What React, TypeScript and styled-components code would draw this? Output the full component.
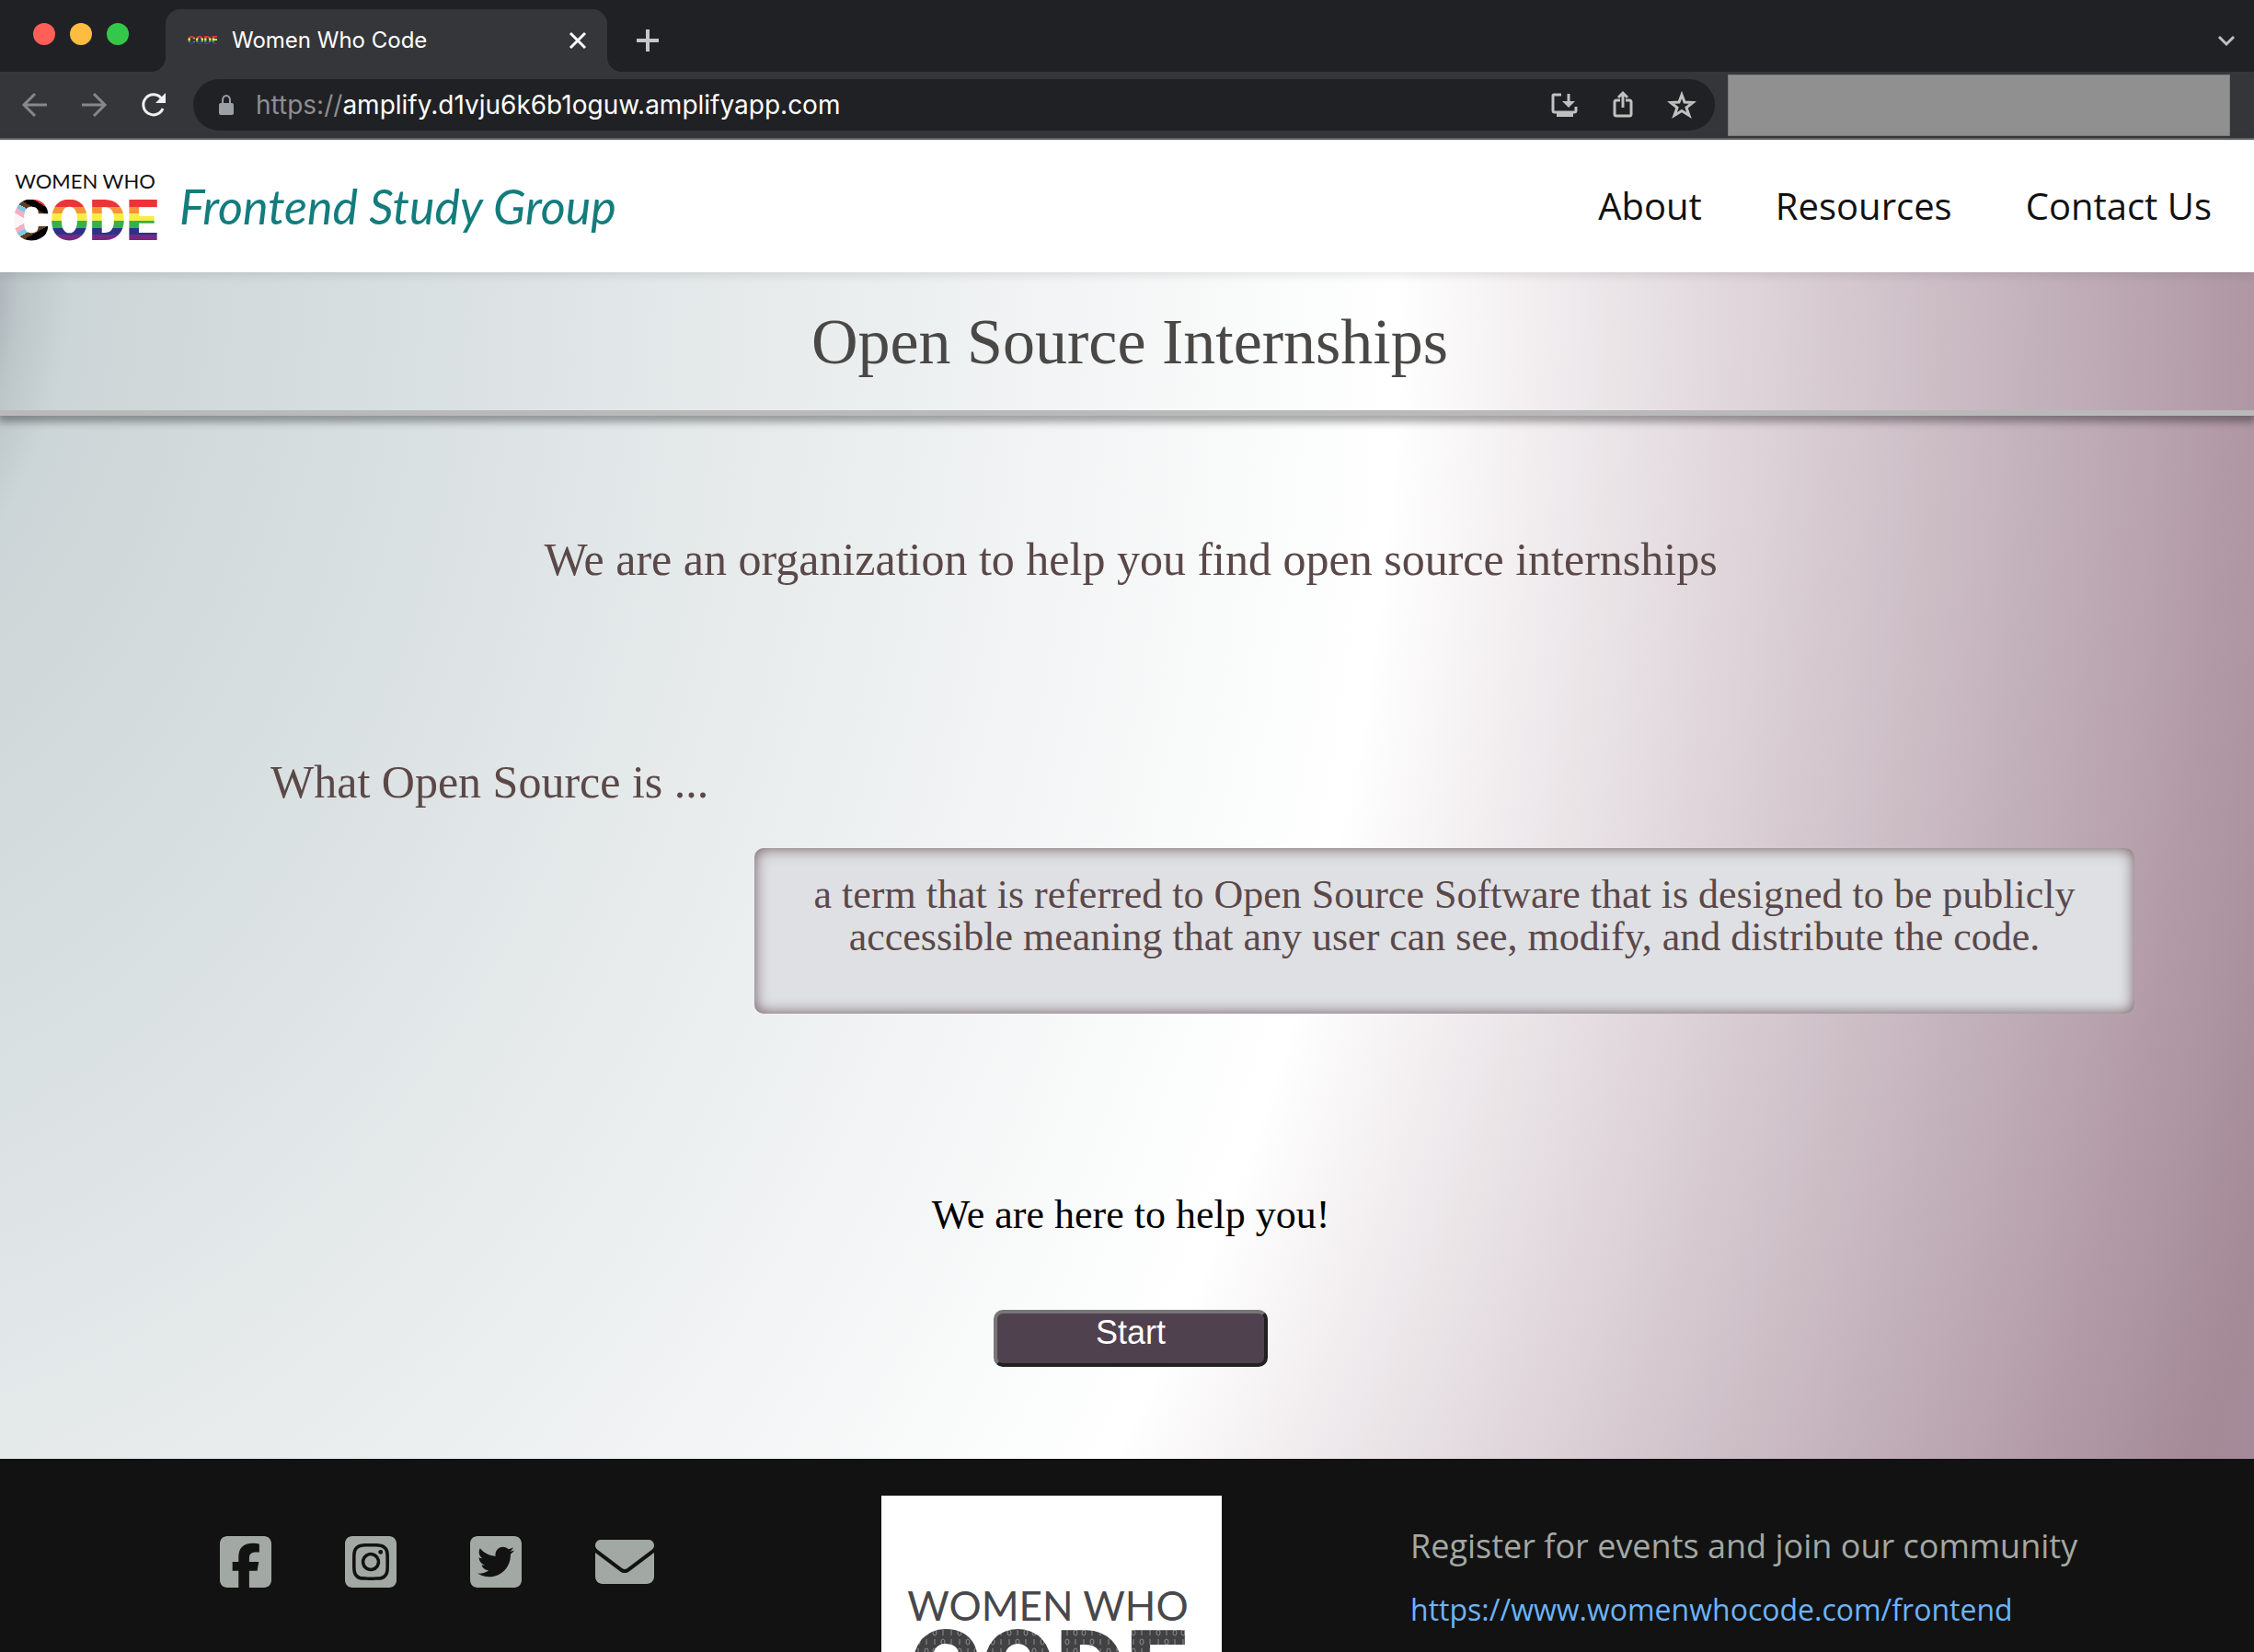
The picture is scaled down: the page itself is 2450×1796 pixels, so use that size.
import React from "react";
import styled, { createGlobalStyle } from "styled-components";
import {
  FaSquareFacebook,
  FaSquareInstagram,
  FaSquareTwitter,
  FaEnvelope,
} from "react-icons/fa6";

const RAINBOW =
  "linear-gradient(#ec3338 0 17%, #f7933c 17% 33%, #f8ec46 33% 50%, #35b04e 50% 67%, #2b3388 67% 83%, #732a82 83%)";

const GlobalStyle = createGlobalStyle`
  *, *::before, *::after { box-sizing: border-box; }
  body { margin: 0; background: #121212; }
  h1, h2, p { margin: 0; font-weight: 400; }
  a { text-decoration: none; }
  button { cursor: pointer; }
`;

const Window = styled.div`
  display: flex;
  flex-direction: column;
  height: 100vh;
  overflow: hidden;
`;

/* ---------- browser frame ---------- */

const TabStrip = styled.div`
  flex: none;
  display: flex;
  align-items: flex-end;
  height: 78px;
  padding-right: 14px;
  background: #202124;
`;

const Lights = styled.div`
  display: flex;
  gap: 16px;
  align-self: flex-start;
  padding: 25px 40px 0 36px;
`;

const Light = styled.span<{ $color: string }>`
  width: 24px;
  height: 24px;
  border-radius: 50%;
  background: ${(p) => p.$color};
`;

const Tab = styled.div`
  position: relative;
  display: flex;
  align-items: center;
  gap: 16px;
  width: 480px;
  height: 68px;
  padding: 0 20px 0 24px;
  border-radius: 16px 16px 0 0;
  background: #35363a;
  &::before,
  &::after {
    content: "";
    position: absolute;
    bottom: 0;
    width: 16px;
    height: 16px;
  }
  &::before {
    left: -16px;
    background: radial-gradient(circle at 0 0, #202124 16px, #35363a 16px);
  }
  &::after {
    right: -16px;
    background: radial-gradient(circle at 100% 0, #202124 16px, #35363a 16px);
  }
`;

const Favicon = styled.span`
  width: 32px;
  font: 900 13px/10px Roboto, sans-serif;
  text-align: center;
  color: transparent;
  background: ${RAINBOW};
  background-clip: text;
  -webkit-background-clip: text;
`;

const TabTitle = styled.span`
  flex: 1;
  font: 400 24px/32px Inter, sans-serif;
  color: #fff;
`;

const IconButton = styled.button<{ $size: number }>`
  display: flex;
  align-items: center;
  justify-content: center;
  flex: none;
  width: ${(p) => p.$size}px;
  height: ${(p) => p.$size}px;
  padding: 0;
  border: 0;
  background: none;
`;

const StripActions = styled.div`
  flex: 1;
  display: flex;
  align-items: center;
  justify-content: space-between;
  height: 68px;
  padding-left: 28px;
`;

const Toolbar = styled.div`
  flex: none;
  display: flex;
  align-items: center;
  height: 74px;
  padding: 0 26px 0 22px;
  border-bottom: 2px solid #69656a;
  background: #35363a;
`;

const NavButtons = styled.div`
  display: flex;
  gap: 32px;
  padding-right: 28px;
`;

const AddressBar = styled.form`
  flex: 1;
  display: flex;
  align-items: center;
  height: 56px;
  padding: 0 20px 0 24px;
  border-radius: 28px;
  background: #202124;
  font: 400 28px/36px Inter, sans-serif;
`;

const Scheme = styled.label`
  padding-left: 20px;
  color: #8e8e90;
`;

const Address = styled.input`
  flex: 1;
  min-width: 0;
  padding: 0;
  border: 0;
  outline: 0;
  background: none;
  font: inherit;
  color: #fff;
`;

const AddressActions = styled.div`
  display: flex;
  gap: 32px;
`;

const HiddenExtensions = styled.div`
  width: 546px;
  height: 67px;
  margin-left: 14px;
  border: 1px solid #7c7d7d;
  background: #909090;
`;

/* ---------- site header ---------- */

const Header = styled.header`
  position: relative;
  flex: none;
  display: flex;
  align-items: center;
  justify-content: space-between;
  height: 144px;
  padding: 0 46px 0 16px;
  background: #fff;
  box-shadow: 0 2px 12px rgba(0, 0, 0, 0.12);
`;

const Brand = styled.a`
  display: flex;
  align-items: center;
  gap: 26px;
`;

const BrandLogo = styled.span`
  display: flex;
  flex-direction: column;
  align-items: center;
  gap: 8px;
  width: 153px;
`;

const BrandTop = styled.span`
  font: 400 22px/24px Lato, sans-serif;
  white-space: nowrap;
  color: #111;
`;

const BrandCode = styled.span`
  display: flex;
  font: 900 62px/46px Roboto, sans-serif;
`;

const Stripes = styled.span<{ $fill: string }>`
  color: transparent;
  background: ${(p) => p.$fill};
  background-clip: text;
  -webkit-background-clip: text;
`;

const PROGRESS_BANDS =
  "#fbf6f5 0 22%, #f5afc6 22% 36%, #78cbe2 36% 48%, #613c1d 48% 60%, #000 60% 78%";
const PROGRESS = `linear-gradient(30deg, ${PROGRESS_BANDS}, #ec3338 78%) 0 0 / 100% 50% no-repeat,
  linear-gradient(150deg, ${PROGRESS_BANDS}, #732a82 78%) 0 100% / 100% 50% no-repeat`;

const BrandName = styled.span`
  font: italic 400 52px/72px Lato, cursive;
  color: #147c7d;
`;

const SiteNav = styled.nav`
  display: flex;
  gap: 80px;
`;

const NavLink = styled.a`
  font: 400 40px/56px "Open Sans", sans-serif;
  color: #111;
`;

/* ---------- page ---------- */

const Page = styled.main`
  flex: none;
  background: radial-gradient(
    120% 294% at -10% 0%,
    #a9b1b8 8%,
    #bcc5c7 9%,
    #ccd5d7 11%,
    #fff 60%,
    #a48997 96%,
    #a58d9b 100%
  );
  font-family: "Liberation Serif", serif;
  text-align: center;
`;

const Banner = styled.div`
  padding: 36px 0 34px 6px;
  border-bottom: 6px solid #b9b9b9;
  box-shadow: 0 5px 8px 2px rgba(0, 0, 0, 0.34);
`;

const Title = styled.h1`
  font-size: 70px;
  line-height: 80px;
  color: #4a4846;
`;

const Content = styled.div`
  display: flex;
  flex-direction: column;
  align-items: center;
  padding: 128px 0 100px 8px;
`;

const Lead = styled.p`
  font-size: 50px;
  line-height: 56px;
  color: #5b4848;
`;

const Question = styled.h2`
  align-self: flex-start;
  margin: 186px 0 0 286px;
  font-size: 50px;
  line-height: 56px;
  color: #5b4848;
`;

const Definition = styled.p`
  align-self: stretch;
  margin: 44px 130px 0 812px;
  padding: 28px 56px 60px;
  border-radius: 10px;
  background: #dee0e4;
  box-shadow: inset 0 0 16px #6b5558;
  font-size: 44px;
  line-height: 46px;
  color: #5b4848;
`;

const HelpText = styled.p`
  margin-top: 196px;
  font-size: 44px;
  line-height: 46px;
  color: #000;
`;

const StartButton = styled.button`
  width: 298px;
  height: 62px;
  margin-top: 80px;
  padding: 0 0 12px;
  border: 4px solid;
  border-color: #767676 #212121 #212121 #767676;
  border-radius: 10px;
  background: #50414f;
  font: 400 36px/40px "Liberation Sans", sans-serif;
  color: #fff;
`;

/* ---------- footer ---------- */

const Footer = styled.footer`
  flex: none;
  display: grid;
  grid-template-columns: 958px 370px 1fr;
  align-items: start;
  padding-top: 40px;
  background: #121212;
`;

const Social = styled.div`
  display: flex;
  gap: 80px;
  padding: 40px 0 0 239px;
`;

const SocialLink = styled.a<{ $width: number }>`
  color: #a2a8a4;
  svg {
    display: block;
    width: ${(p) => p.$width}px;
    height: 64px;
  }
`;

const FooterLogo = styled.div`
  height: 370px;
  background: #fff;
  svg {
    display: block;
  }
`;

const Join = styled.div`
  display: flex;
  flex-direction: column;
  gap: 20px;
  padding: 30px 0 0 205px;
  font: 400 36px/50px "Open Sans", sans-serif;
  color: #a2a8a4;
`;

const JoinLink = styled.a`
  font-size: 32px;
  line-height: 48px;
  color: #6cb4f8;
`;

function CodeLogo() {
  return (
    <svg width="370" height="370" viewBox="0 0 370 370" role="img" aria-label="Women Who Code">
      {/* tile of ones and zeros that fills the big letters */}
      <pattern id="binary" width="54" height="20" y="144" patternUnits="userSpaceOnUse">
        <rect width="54" height="20" fill="#424244" />
        <g fill="none" stroke="#8e8e91" strokeWidth="1">
          <ellipse cx="4" cy="5" rx="2" ry="3" />
          <path d="M13 2V8M22 2V8" />
          <ellipse cx="31" cy="5" rx="2" ry="3" />
          <path d="M40 2V8" />
          <ellipse cx="49" cy="5" rx="2" ry="3" />
          <path d="M4 12V18" />
          <ellipse cx="13" cy="15" rx="2" ry="3" />
          <path d="M22 12V18M31 12V18" />
          <ellipse cx="40" cy="15" rx="2" ry="3" />
          <path d="M49 12V18" />
        </g>
      </pattern>
      <text x="181" y="136" textAnchor="middle" fontFamily="Lato" fontSize="44" fill="#48484a">
        WOMEN WHO
      </text>
      <text
        x="181"
        y="231"
        textAnchor="middle"
        fontFamily="Roboto"
        fontWeight="900"
        fontSize="118"
        fill="url(#binary)"
      >
        CODE
      </text>
    </svg>
  );
}

type StrokeProps = { size: number; color: string; width?: number; children: React.ReactNode };

function Stroke({ size, color, width = 3, children }: StrokeProps) {
  return (
    <svg width={size} height={size} viewBox={`0 0 ${size} ${size}`} fill="none" stroke={color} strokeWidth={width}>
      {children}
    </svg>
  );
}

export default function App() {
  return (
    <Window>
      <GlobalStyle />
      <TabStrip>
        <Lights>
          <Light $color="#ff5f57" />
          <Light $color="#febc40" />
          <Light $color="#34c84a" />
        </Lights>
        <Tab>
          <Favicon aria-hidden="true">CODE</Favicon>
          <TabTitle>Women Who Code</TabTitle>
          <IconButton $size={24} aria-label="Close tab">
            <Stroke size={24} color="#fff">
              <path d="M4 4L20 20M20 4L4 20" />
            </Stroke>
          </IconButton>
        </Tab>
        <StripActions>
          <IconButton $size={32} aria-label="New tab">
            <Stroke size={32} color="#c4c6c9" width={4}>
              <path d="M16 4V28M4 16H28" />
            </Stroke>
          </IconButton>
          <IconButton $size={32} aria-label="Search tabs">
            <Stroke size={32} color="#c0c0c0">
              <path d="M8 12L16 20L24 12" />
            </Stroke>
          </IconButton>
        </StripActions>
      </TabStrip>

      <Toolbar>
        <NavButtons>
          <IconButton $size={32} aria-label="Back">
            <Stroke size={32} color="#868789">
              <path d="M29 16H5M16 4L4 16L16 28" />
            </Stroke>
          </IconButton>
          <IconButton $size={32} aria-label="Forward">
            <Stroke size={32} color="#868789">
              <path d="M3 16H27M16 4L28 16L16 28" />
            </Stroke>
          </IconButton>
          <IconButton $size={32} aria-label="Reload">
            <Stroke size={32} color="#f1f1f1">
              <path d="M27 20A11 11 0 1 1 25 8.500" />
              <path d="M30 3V14H19Z" fill="#f1f1f1" stroke="none" />
            </Stroke>
          </IconButton>
        </NavButtons>
        <AddressBar onSubmit={(e) => e.preventDefault()}>
          <Stroke size={24} color="#9aa0a6" width={2}>
            <path d="M8 11V7A4 5 0 0 1 16 7V11" />
            <rect x="4" y="10" width="16" height="13" rx="2" fill="#9aa0a6" stroke="none" />
          </Stroke>
          <Scheme htmlFor="address">https://</Scheme>
          <Address id="address" defaultValue="amplify.d1vju6k6b1oguw.amplifyapp.com" />
          <AddressActions>
            <IconButton $size={32} type="button" aria-label="Install app">
              <Stroke size={32} color="#c0c0c0">
                <path d="M13 5H5Q4 5 4 6V22Q4 24 6 24H27Q29 24 29 22V18" />
                <path d="M21 4V15" />
                <path d="M14 12H28L21 19Z" fill="#c0c0c0" stroke="none" />
                <path d="M8 24H26V29H8Z" fill="#c0c0c0" stroke="none" />
              </Stroke>
            </IconButton>
            <IconButton $size={32} type="button" aria-label="Share">
              <Stroke size={32} color="#c0c0c0">
                <path d="M13 11H9Q7 11 7 13V26Q7 28 9 28H23Q25 28 25 26V13Q25 11 23 11H19" />
                <path d="M16 19V4M11 8L16 3L21 8" />
              </Stroke>
            </IconButton>
            <IconButton $size={32} type="button" aria-label="Bookmark">
              <Stroke size={32} color="#c0c0c0">
                <path d="M16 5L19 13L28 13.500L21 19L24 27.500L16 22.500L8 27.500L11 19L4 13.500L13 13Z" />
              </Stroke>
            </IconButton>
          </AddressActions>
        </AddressBar>
        <HiddenExtensions />
      </Toolbar>

      <Header>
        <Brand href="#">
          <BrandLogo>
            <BrandTop>WOMEN WHO</BrandTop>
            <BrandCode>
              <Stripes $fill={PROGRESS}>C</Stripes>
              <Stripes $fill={RAINBOW}>ODE</Stripes>
            </BrandCode>
          </BrandLogo>
          <BrandName>Frontend Study Group</BrandName>
        </Brand>
        <SiteNav>
          <NavLink href="#about">About</NavLink>
          <NavLink href="#resources">Resources</NavLink>
          <NavLink href="#contact">Contact Us</NavLink>
        </SiteNav>
      </Header>

      <Page>
        <Banner>
          <Title>Open Source Internships</Title>
        </Banner>
        <Content>
          <Lead>We are an organization to help you find open source internships</Lead>
          <Question>What Open Source is ...</Question>
          <Definition>
            a term that is referred to Open Source Software that is designed to be publicly accessible
            meaning that any user can see, modify, and distribute the code.
          </Definition>
          <HelpText>We are here to help you!</HelpText>
          <StartButton type="button">Start</StartButton>
        </Content>
      </Page>

      <Footer>
        <Social>
          <SocialLink href="#facebook" aria-label="Facebook" $width={56}>
            <FaSquareFacebook />
          </SocialLink>
          <SocialLink href="#instagram" aria-label="Instagram" $width={56}>
            <FaSquareInstagram />
          </SocialLink>
          <SocialLink href="#twitter" aria-label="Twitter" $width={56}>
            <FaSquareTwitter />
          </SocialLink>
          <SocialLink href="#mail" aria-label="Email" $width={64}>
            <FaEnvelope />
          </SocialLink>
        </Social>
        <FooterLogo>
          <CodeLogo />
        </FooterLogo>
        <Join>
          <p>Register for events and join our community</p>
          <JoinLink href="https://www.womenwhocode.com/frontend">https://www.womenwhocode.com/frontend</JoinLink>
        </Join>
      </Footer>
    </Window>
  );
}
